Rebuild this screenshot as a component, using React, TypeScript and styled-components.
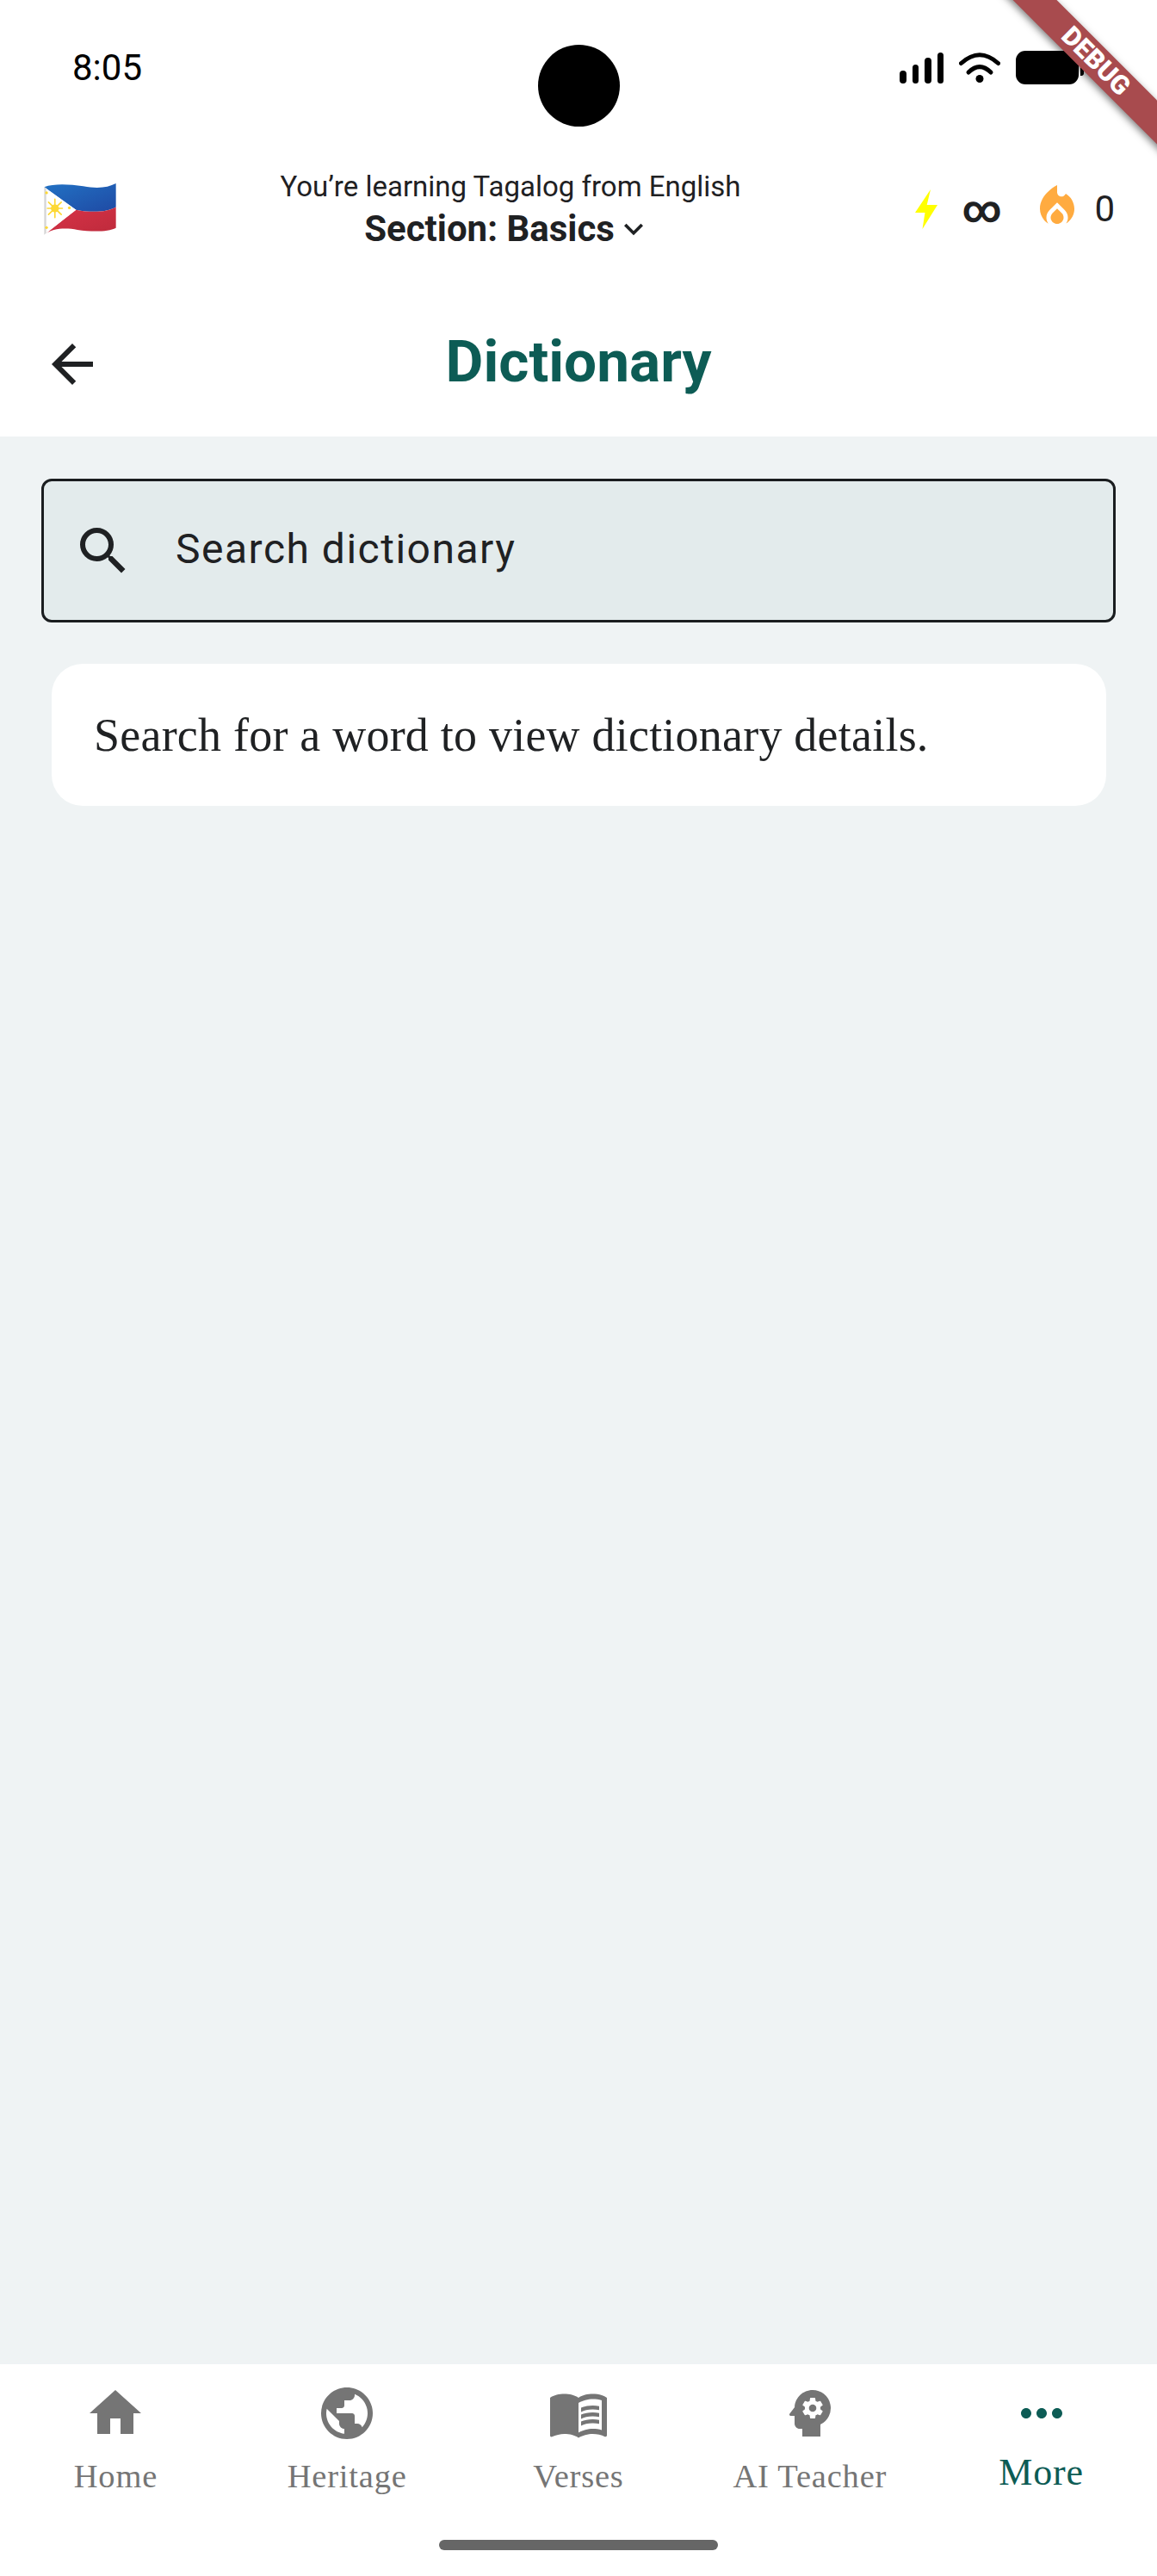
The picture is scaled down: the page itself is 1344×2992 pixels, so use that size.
import React from "react"
import styled, {createGlobalStyle} from "styled-components"
import {MdArrowBack, MdHome, MdKeyboardArrowDown, MdLocalFireDepartment, MdMenuBook, MdMoreHoriz, MdPsychology, MdPublic, MdSearch} from "react-icons/md"

const TEAL = "#0d5c55"
const INK = "#1f2123"
const MUTED = "#757575"

const GlobalStyle = createGlobalStyle`
    html, body {
        margin: 0;
        padding: 0;
        background: #fff;
    }
    * {
        box-sizing: border-box;
    }
`

const Page = styled.div`
    position: relative;
    width: 1344px;
    height: 2992px;
    overflow: hidden;
    display: flex;
    flex-direction: column;
    background: #eff3f4;
    font-family: Roboto, "Liberation Sans", sans-serif;
    color: ${INK};
`

const Top = styled.header`
    background: #fff;
`

const StatusBar = styled.div`
    position: relative;
    height: 157px;
    padding: 0 91px 0 84px;
    display: flex;
    align-items: center;
    justify-content: space-between;
`

const Time = styled.span`
    font-size: 42px;
    color: #000;
    line-height: 1;
`

const Camera = styled.div`
    position: absolute;
    left: 625px;
    top: 52px;
    width: 95px;
    height: 95px;
    border-radius: 50%;
    background: #000;
`

const StatusIcons = styled.div`
    display: flex;
    align-items: center;
`

const Signal = styled.div`
    display: flex;
    align-items: flex-end;
    gap: 7px;
    height: 36px;
    margin-right: 18px;
`

const SignalBar = styled.span<{$h: number}>`
    width: 7.5px;
    height: ${p => p.$h}px;
    border-radius: 4px;
    background: #000;
`

const Battery = styled.div`
    position: relative;
    width: 73px;
    height: 39px;
    margin-left: 18px;
    border-radius: 11px;
    background: #000;

    &::after {
        content: "";
        position: absolute;
        left: 75px;
        top: 11px;
        width: 4px;
        height: 18px;
        border-radius: 0 3px 3px 0;
        background: #000;
    }
`

const Banner = styled.div`
    position: absolute;
    left: 1073px;
    top: 53px;
    width: 400px;
    height: 36px;
    transform: rotate(45deg);
    background: #a84b4e;
    box-shadow: 0 3px 9px rgba(0, 0, 0, 0.5);
    color: #fff;
    font-size: 30.6px;
    font-weight: 900;
    line-height: 36px;
    text-align: center;
    z-index: 5;
`

const LearnerBar = styled.div`
    height: 166px;
    padding: 0 49px 0 51px;
    display: flex;
    align-items: center;
`

const Flag = styled.svg`
    width: 84px;
    height: 62px;
    margin-top: 5px;
    flex: none;
`

const Course = styled.div`
    width: 536px;
    margin: 3px 0 0 190px;
    display: flex;
    flex-direction: column;
    align-items: center;
`

const CourseLine = styled.span`
    font-size: 33px;
    line-height: 48px;
    white-space: nowrap;
`

const SectionLine = styled.div`
    display: flex;
    align-items: center;
    margin-right: 16px;
    font-size: 42px;
    font-weight: 700;
    line-height: 50px;
    white-space: nowrap;

    svg {
        margin: 0 -11px 0 0;
    }
`

const Stats = styled.div`
    margin-left: auto;
    display: flex;
    align-items: center;
`

const Bolt = styled.svg`
    width: 26px;
    height: 46px;
    margin-top: 6px;
`

const Infinity_ = styled.span`
    width: 41px;
    margin: 6px 40px 0 28px;
    font-size: 44px;
    font-weight: 700;
    line-height: 60px;
    text-align: center;
`

const Count = styled.span`
    font-size: 42px;
    line-height: 1;
    margin: 6px 0 0 13px;
`

const AppBar = styled.div`
    height: 184px;
    padding: 10px 48px 0;
    display: grid;
    grid-template-columns: 1fr auto 1fr;
    align-items: center;
`

const BackButton = styled.div`
    display: flex;
    margin-top: 6px;
`

const Title = styled.h1`
    margin: 0;
    color: ${TEAL};
    font-size: 67.5px;
    font-weight: 700;
    line-height: 1;
`

const Content = styled.main`
    flex: 1;
    padding: 49px 48px 0;
`

const SearchBox = styled.div`
    height: 167px;
    padding-left: 33px;
    display: flex;
    align-items: center;
    gap: 48px;
    border: 3px solid #1a1d1f;
    border-radius: 12px;
    background: #e3ebec;
`

const SearchText = styled.span`
    margin-top: -3px;
    font-size: 48px;
    letter-spacing: 1.5px;
    line-height: 1;
`

const EmptyCard = styled.div`
    height: 165px;
    margin: 48px 11px 0 12px;
    padding-left: 49px;
    display: flex;
    align-items: center;
    border-radius: 36px;
    background: #fff;
    font-family: "Liberation Serif", serif;
    font-size: 54px;
    letter-spacing: 0.22px;
    white-space: nowrap;
`

const BottomNav = styled.nav`
    height: 246px;
    background: #fff;
    display: flex;
    flex-direction: column;
    align-items: center;
`

const Tabs = styled.div`
    width: 100%;
    height: 204px;
    display: grid;
    grid-template-columns: repeat(5, 1fr);
`

const Tab = styled.div<{$active?: boolean}>`
    padding-top: 21px;
    display: flex;
    flex-direction: column;
    align-items: center;
    color: ${p => p.$active ? TEAL : MUTED};
    font-family: "Liberation Serif", serif;
    font-size: ${p => p.$active ? 44 : 38.5}px;
    letter-spacing: 0.8px;
    line-height: 50px;
    white-space: nowrap;

    span {
        margin-top: ${p => p.$active ? 8 : 12}px;
    }
`

const HomeIndicator = styled.div`
    width: 324px;
    height: 12px;
    border-radius: 6px;
    background: #666;
`

const tabs = [
    {label: "Home", Icon: MdHome},
    {label: "Heritage", Icon: MdPublic},
    {label: "Verses", Icon: MdMenuBook},
    {label: "AI Teacher", Icon: MdPsychology},
    {label: "More", Icon: MdMoreHoriz, active: true},
]

function PhilippineFlag() {
    return (
        <Flag viewBox="64 62 250 192" preserveAspectRatio="none">
            <defs>
                <linearGradient id="flagBlue" x1="0" y1="0" x2="1" y2="1">
                    <stop offset="0" stopColor="#2272c4" />
                    <stop offset="1" stopColor="#1f4aa4" />
                </linearGradient>
                <linearGradient id="flagRed" x1="0" y1="0" x2="1" y2="1">
                    <stop offset="0" stopColor="#d93348" />
                    <stop offset="1" stopColor="#bd2a3b" />
                </linearGradient>
            </defs>
            <path d="M65 78C100 65 150 68 200 75C250 85 285 80 313 65L313 150C285 168 230 172 175 160L65 78Z" fill="url(#flagBlue)" />
            <path d="M175 160C230 172 285 168 313 150L313 225C285 240 230 240 180 232C140 225 95 225 65 250L175 160Z" fill="url(#flagRed)" />
            <path d="M65 78L175 160L65 250Z" fill="#fff" />
            <path d="M65 78L72 83L72 244L65 250Z" fill="#d6d6d6" />
            <g stroke="#fdd835" strokeWidth="5" strokeLinecap="round">
                <path d="M102 122V188M76 155H128M80 133L124 177M80 177L124 133" />
            </g>
            <circle cx="102" cy="155" r="14" fill="#fdd835" />
            <circle cx="73" cy="99" r="5" fill="#fdd835" />
            <circle cx="152" cy="153" r="5" fill="#fdd835" />
            <circle cx="73" cy="224" r="5" fill="#fdd835" />
        </Flag>
    )
}

function WifiIcon() {
    return (
        <svg width="48" height="36" viewBox="0 0 48 36" fill="none" stroke="#000" strokeWidth="5" strokeLinecap="round">
            <path d="M2.5 12.5Q24 -7 45.500 12.500" />
            <path d="M11 23Q24 10 37 23" />
            <circle cx="24" cy="30.500" r="4.500" fill="#000" stroke="none" />
        </svg>
    )
}

export default function App(): JSX.Element {
    return (
        <Page>
            <GlobalStyle />
            <Banner>DEBUG</Banner>
            <Top>
                <StatusBar>
                    <Time>8:05</Time>
                    <Camera />
                    <StatusIcons>
                        <Signal>
                            {[15, 22, 30, 36].map(h => <SignalBar key={h} $h={h} />)}
                        </Signal>
                        <WifiIcon />
                        <Battery />
                    </StatusIcons>
                </StatusBar>
                <LearnerBar>
                    <PhilippineFlag />
                    <Course>
                        <CourseLine>You’re learning Tagalog from English</CourseLine>
                        <SectionLine>
                            Section: Basics
                            <MdKeyboardArrowDown size={44} />
                        </SectionLine>
                    </Course>
                    <Stats>
                        <Bolt viewBox="0 0 26 46">
                            <path d="M18 0L0 27H11.500L8.500 46L26 18H13.700Z" fill="#ffff00" />
                        </Bolt>
                        <Infinity_>∞</Infinity_>
                        <MdLocalFireDepartment size={60} color="#ffab40" />
                        <Count>0</Count>
                    </Stats>
                </LearnerBar>
                <AppBar>
                    <BackButton><MdArrowBack size={72} /></BackButton>
                    <Title>Dictionary</Title>
                </AppBar>
            </Top>
            <Content>
                <SearchBox>
                    <MdSearch size={72} />
                    <SearchText>Search dictionary</SearchText>
                </SearchBox>
                <EmptyCard>Search for a word to view dictionary details.</EmptyCard>
            </Content>
            <BottomNav>
                <Tabs>
                    {tabs.map(({label, Icon, active}) => (
                        <Tab key={label} $active={active}>
                            <Icon size={72} />
                            <span>{label}</span>
                        </Tab>
                    ))}
                </Tabs>
                <HomeIndicator />
            </BottomNav>
        </Page>
    )
}
